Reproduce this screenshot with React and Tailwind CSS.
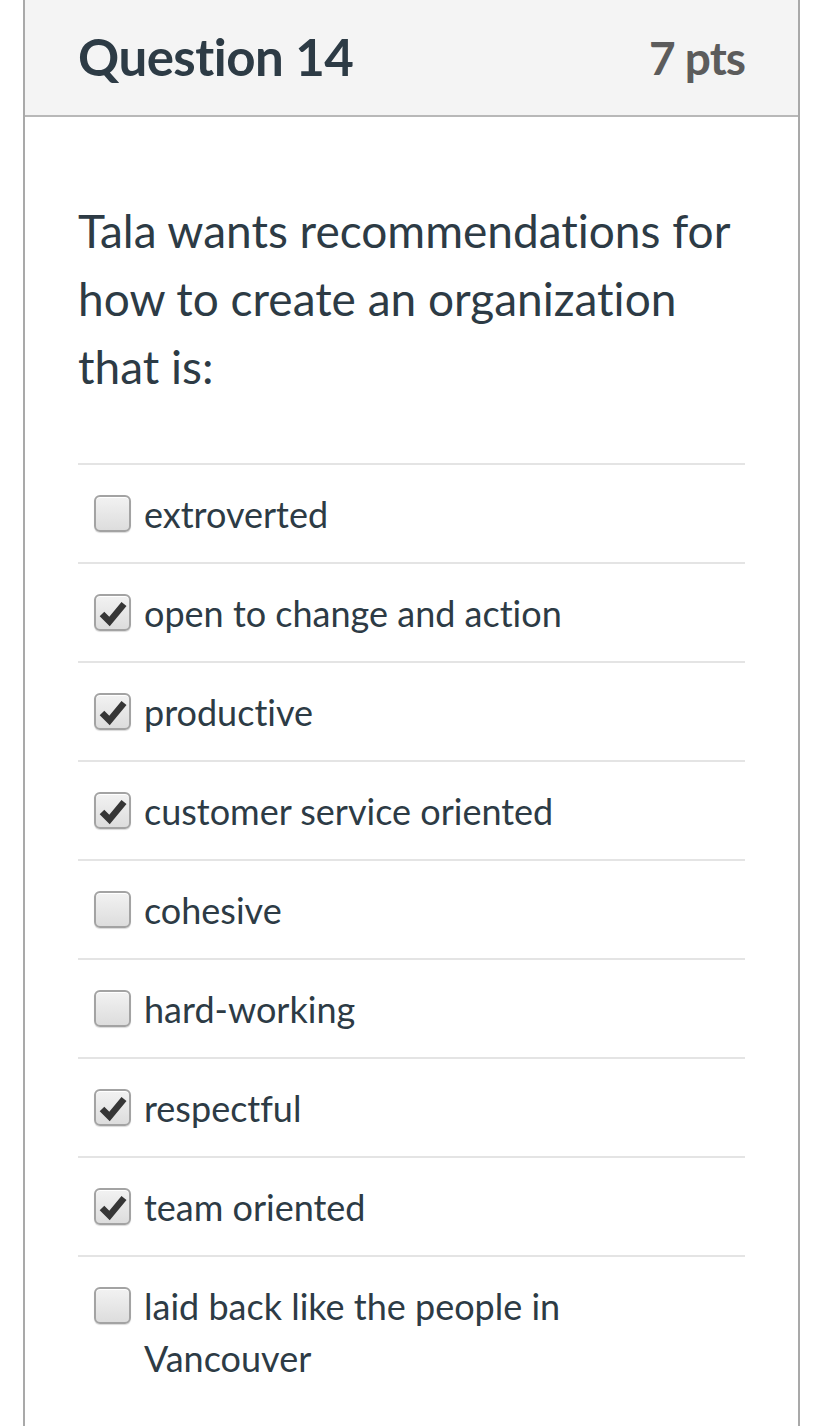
import React from 'react';

const answers = [
  { label: 'extroverted', checked: false },
  { label: 'open to change and action', checked: true },
  { label: 'productive', checked: true },
  { label: 'customer service oriented', checked: true },
  { label: 'cohesive', checked: false },
  { label: 'hard-working', checked: false },
  { label: 'respectful', checked: true },
  { label: 'team oriented', checked: true },
  { label: 'laid back like the people in Vancouver', checked: false },
];

const Checkbox = ({ checked }) => (
  <div className="mt-[7px] ml-[16px] w-[37px] h-[37px] shrink-0 rounded-[6px] border-2 border-[#a3a3a3] bg-gradient-to-b from-[#f2f2f2] to-[#dddddd] shadow-[inset_0_1px_0_#ffffff,0_1px_1px_rgba(0,0,0,0.15)] flex items-center justify-center">
    {checked && (
      <svg width="30" height="30" viewBox="0 0 30 30">
        <path d="M4 16 L11.5 23.5 L26 6" fill="none" stroke="#363636" strokeWidth="6.5" strokeLinejoin="miter" strokeLinecap="butt" />
      </svg>
    )}
  </div>
);

const App = () => {
  return (
    <div className="min-h-screen bg-white font-['Lato','Noto_Sans',sans-serif] text-[#2d3b45] [font-variant-ligatures:none]">
      <div className="ml-[23px] w-[777px] min-h-[1426px] border-x-2 border-[#a9a9a9]">
        <div className="h-[117px] bg-[#f4f4f4] border-b-2 border-[#b8b8b8] flex items-center justify-between px-[53px]">
          <h2 className="text-[51px] font-bold tracking-[-0.5px]">Question 14</h2>
          <span className="text-[46px] font-bold text-[#5c5c5c] tracking-[-1px]">7 pts</span>
        </div>

        <div className="px-[53px] pt-[80px]">
          <p className="text-[46px] leading-[68px]">
            Tala wants recommendations for how to create an organization that is:
          </p>

          <div className="mt-[62px]">
            {answers.map((a) => (
              <div key={a.label} className="border-t-2 border-[#e4e4e4] flex gap-[13px] pt-[23px] pb-[22px] pr-[40px]">
                <Checkbox checked={a.checked} />
                <span className="text-[36px] leading-[52px]">{a.label}</span>
              </div>
            ))}
          </div>
        </div>
      </div>
    </div>
  );
};

export default App;
